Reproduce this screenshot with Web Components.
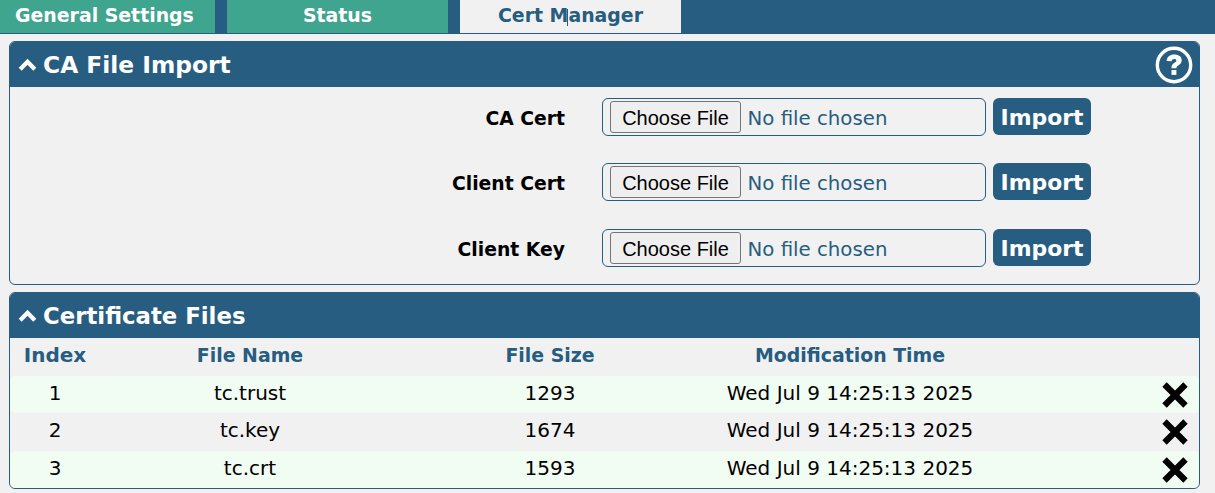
<!DOCTYPE html>
<html><head><meta charset="utf-8"><title>Cert Manager</title>
<style>
html,body{margin:0;padding:0;background:#f1f1f1;overflow:hidden}
body{font-family:"DejaVu Sans",sans-serif;font-size:18px;color:#000}
</style></head><body>
<app-shell>
  <tab-bar slot="tabs">
    <tab-item style="--w:215px;--pl:15px;--ta:left">General Settings</tab-item>
    <tab-item style="--w:221px">Status</tab-item>
    <tab-item active style="--w:221px" caret>Cert Manager</tab-item>
  </tab-bar>
  <app-panel heading="CA File Import" help style="--h:244px;--hs:23.350px">
    <import-list>
      <import-row label="CA Cert"></import-row>
      <import-row label="Client Cert"></import-row>
      <import-row label="Client Key"></import-row>
    </import-list>
  </app-panel>
  <app-panel heading="Certificate Files" style="--h:197px;--hs:22.800px">
    <file-table>
      <file-row head><span style="font-size:20px">Index</span><span>File Name</span><span>File Size</span><span>Modification Time</span></file-row>
      <file-row odd del><span>1</span><span>tc.trust</span><span>1293</span><span>Wed Jul 9 14:25:13 2025</span></file-row>
      <file-row del><span>2</span><span>tc.key</span><span>1674</span><span>Wed Jul 9 14:25:13 2025</span></file-row>
      <file-row odd del><span>3</span><span>tc.crt</span><span>1593</span><span>Wed Jul 9 14:25:13 2025</span></file-row>
    </file-table>
  </app-panel>
</app-shell>
<script>
const def=(name,css,html)=>customElements.define(name,class extends HTMLElement{
  connectedCallback(){
    if(this.shadowRoot)return;
    const r=this.attachShadow({mode:'open'});
    r.innerHTML='<style>'+css+'</style>'+(typeof html==='function'?html(this):html);
  }
});
const esc=s=>String(s).replace(/&/g,'&amp;').replace(/</g,'&lt;');
def('app-shell',':host{display:flex;flex-direction:column}.c{display:flex;flex-direction:column;gap:7px;padding:7px 15px 0 9px}',
 '<slot name="tabs"></slot><div class="c"><slot></slot></div>');
def('tab-bar',':host{display:flex;gap:12px;height:33px;background:#265d80;border-bottom:1px solid #265d80;box-sizing:content-box}','<slot></slot>');
def('tab-item',`:host{display:block;position:relative;box-sizing:border-box;width:var(--w);height:33px;line-height:30px;padding-left:var(--pl,0);text-align:var(--ta,center);background:#3fa58e;color:#fff;font-weight:700;font-size:18.9px;white-space:nowrap}
:host([active]){background:#f1f1f1;color:#265d80;font-weight:700}
.caret{position:absolute;left:107px;top:9px;width:1px;height:17px;background:#265d80}`,
 h=>'<slot></slot>'+(h.hasAttribute('caret')?'<i class="caret"></i>':''));
def('app-panel',`:host{display:block;box-sizing:border-box;height:var(--h);border:1px solid #265d80;border-radius:6px;background:#f1f1f1;overflow:hidden}
header{display:flex;align-items:center;gap:6px;height:45px;margin:-1px -1px 0;padding:1px 7px 0 9px;box-sizing:content-box;background:#265d80;color:#fff;font-weight:700;font-size:var(--hs);border-radius:6px 6px 0 0}
.h{flex:1;white-space:nowrap}
svg{display:block;flex:none}`,
 h=>`<header><svg width="19" height="15" viewBox="0 0 19 15"><path d="M2.200 12.300 9.500 4.700l7.300 7.600" fill="none" stroke="#fff" stroke-width="4.200"/></svg><span class="h">${esc(h.getAttribute('heading'))}</span>${h.hasAttribute('help')?`<svg width="38" height="38" viewBox="0 0 38 38"><circle cx="19" cy="19" r="16.700" fill="none" stroke="#fff" stroke-width="3.400"/><path d="M11.600 15c.4-4.300 3.300-6.500 7.600-6.500 4.500 0 7.500 2.200 7.500 5.700 0 2.700-1.600 4-3.500 5.200-1.400.9-1.800 1.400-1.800 2.800h-4.900c0-2.900.8-4.100 3-5.500 1.300-.8 1.900-1.300 1.900-2.200 0-1-.9-1.600-2.200-1.600-1.500 0-2.300.7-2.600 2.300z" fill="#fff"/><rect x="16.500" y="24" width="4.900" height="4.900" fill="#fff"/></svg>`:''}</header><slot></slot>`);
def('import-list',`:host{display:flex;flex-direction:column;gap:27px;padding-top:11px}
::slotted(:nth-child(2)){margin-bottom:1px}`,'<slot></slot>');
def('import-row',`:host{display:flex;align-items:center;height:38px}
label{width:555px;text-align:right;font-weight:700;font-size:18.800px;white-space:nowrap;margin-right:37px;padding-top:2px}
.f{display:flex;align-items:center;box-sizing:border-box;width:384px;height:38px;border:1px solid #265d80;border-radius:6px;padding-left:7px;margin-right:7px}
button.c{box-sizing:border-box;width:131px;height:32px;padding:2px 0 0;border:1px solid #767676;border-radius:3px;background:#efefef;color:#000;font:20px "Liberation Sans",sans-serif}
.n{margin-left:6.500px;padding-top:2px;color:#265d80;font-size:19.750px;white-space:nowrap}
button.i{box-sizing:border-box;width:98px;height:37px;margin-top:-1px;padding:2px 0 0;border:0;border-radius:6px;background:#265d80;color:#fff;font:700 21.900px "DejaVu Sans",sans-serif}`,
 h=>`<label>${esc(h.getAttribute('label'))}</label><div class="f"><button class="c">Choose File</button><span class="n">No file chosen</span></div><button class="i">Import</button>`);
def('file-table',':host{display:flex;flex-direction:column}','<slot></slot>');
def('file-row',`:host{display:grid;box-sizing:border-box;grid-template-columns:90px 300px 300px 300px 1fr;align-items:center;height:38px;padding-bottom:4px;text-align:center;font-size:20px;line-height:30px;white-space:nowrap;border-radius:5px}
:host([head]){color:#265d80;font-weight:700;font-size:18.900px}
:host([odd]){height:37px;background:#f1fcf2}
svg{justify-self:end;margin:4px 10px 0 0;display:block}`,
 h=>`<slot></slot>`+(h.hasAttribute('del')?`<svg width="28" height="28" viewBox="0 0 28 28"><path d="M3.500 3.500 24.500 24.500M24.500 3.500 3.500 24.500" stroke="#000" stroke-width="6.200" fill="none"/></svg>`:''));
</script>
</body></html>
